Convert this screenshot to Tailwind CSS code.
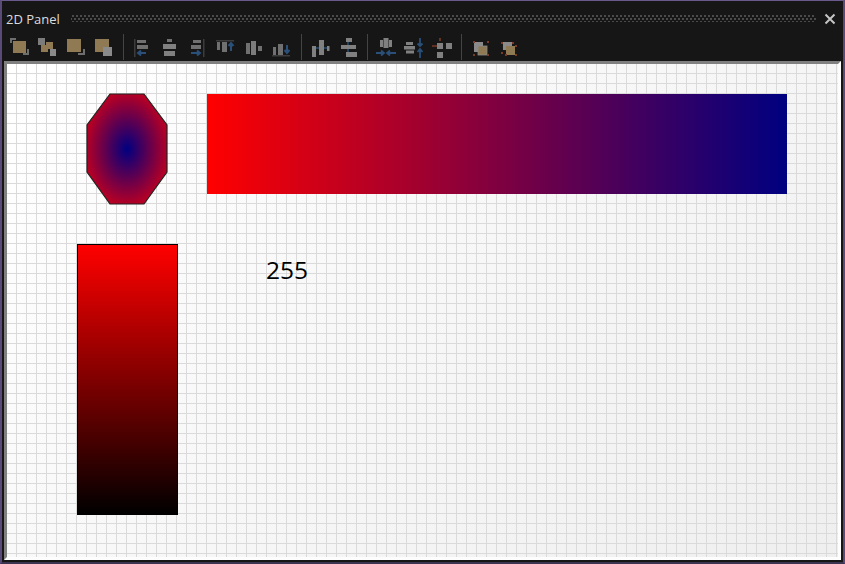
<!DOCTYPE html>
<html lang="en">

<head>
  <meta charset="UTF-8" />
  <meta name="viewport" content="width=device-width, initial-scale=1.0" />
  <title>2D Panel</title>
  <script src="https://cdn.jsdelivr.net/npm/@tailwindcss/browser@4"></script>
</head>

<body class="bg-[#161616] overflow-hidden">

  <div class="w-[845px] h-[564px] flex flex-col bg-[#161616] border-x-2 border-t border-b-2 border-x-[#5a4a78] border-t-[#6a5a8c] border-b-[#3c3350] font-['Open_Sans',sans-serif]">

    <!-- Title bar -->
    <div class="h-[33px] shrink-0 flex items-center pl-1 pr-[7px]">
      <span class="w-[65px] text-[13px] leading-none text-[#dcdcdc] pt-[3px]">2D Panel</span>
      <div class="flex-1 h-[7px] mt-[2px] bg-[radial-gradient(circle,#4a4a4a_0.8px,transparent_1px),radial-gradient(circle,#4a4a4a_0.8px,transparent_1px)] bg-size-[4px_6px] bg-position-[0_-2px,2px_1px]"></div>
      <svg class="w-3 h-3 ml-2 mt-[2px]" viewBox="0 0 12 12"><path d="M1.5 1.5 L10.5 10.5 M10.5 1.5 L1.5 10.5" stroke="#c4c4c4" stroke-width="2" /></svg>
    </div>

    <!-- Toolbar -->
    <div class="h-[27px] shrink-0 flex items-start pl-[3px] blur-[0.4px]">
      <svg width="28" height="26" viewBox="0 0 28 26"><path d="M6 9V5h5M23 15v5h-5" fill="none" stroke="#6e6e6e" stroke-width="2" /><rect x="8" y="7" width="13" height="12" fill="#8f7a54" /></svg>
      <svg width="28" height="26" viewBox="0 0 28 26"><rect x="5" y="4" width="7" height="7" fill="#7c7c7c" /><rect x="8" y="11" width="7" height="7" fill="#8f7a54" /><rect x="13" y="8" width="7" height="7" fill="#8f7a54" /><rect x="17" y="15" width="6" height="7" fill="#8a8a8a" /></svg>
      <svg width="28" height="26" viewBox="0 0 28 26"><path d="M23 15v5h-6" fill="none" stroke="#6e6e6e" stroke-width="2" /><rect x="6" y="5" width="14" height="13" fill="#8f7a54" /></svg>
      <svg width="28" height="26" viewBox="0 0 28 26"><rect x="6" y="5" width="14" height="13" fill="#8f7a54" /><rect x="14" y="13" width="9" height="9" fill="#8a8a8a" /></svg>
      <div class="w-px h-[26px] bg-[#444] ml-[6px] mr-[3px]"></div>

      <svg width="28" height="26" viewBox="0 0 28 26"><rect x="7" y="5" width="1.5" height="18" fill="#3c3c3c" /><rect x="10" y="6" width="9" height="3" fill="#707070" /><rect x="10" y="11" width="11" height="4" fill="#707070" /><path d="M19 19H11M14 16.5L11 19L14 21.5" fill="none" stroke="#2a4f78" stroke-width="2" /></svg>
      <svg width="28" height="26" viewBox="0 0 28 26"><rect x="12" y="5" width="5" height="3" fill="#707070" /><rect x="8" y="10" width="13" height="5" fill="#808080" /><rect x="9" y="17" width="11" height="5" fill="#808080" /></svg>
      <svg width="28" height="26" viewBox="0 0 28 26"><rect x="20" y="5" width="1.5" height="18" fill="#3c3c3c" /><rect x="10" y="6" width="8" height="3" fill="#707070" /><rect x="8" y="11" width="10" height="4" fill="#707070" /><path d="M8 19H17M14 16.5L17 19L14 21.5" fill="none" stroke="#2a4f78" stroke-width="2" /></svg>
      <svg width="28" height="26" viewBox="0 0 28 26"><rect x="5" y="6" width="18" height="1.5" fill="#3c3c3c" /><rect x="6" y="8" width="3" height="8" fill="#707070" /><rect x="11" y="8" width="5" height="10" fill="#707070" /><path d="M20 17V9M17.5 12L20 9L22.5 12" fill="none" stroke="#2a4f78" stroke-width="2" /></svg>
      <svg width="28" height="26" viewBox="0 0 28 26"><rect x="7" y="9" width="4" height="11" fill="#707070" /><rect x="12" y="7" width="5" height="14" fill="#7c7c7c" /><rect x="19" y="12" width="4" height="5" fill="#707070" /></svg>
      <svg width="28" height="26" viewBox="0 0 28 26"><rect x="5" y="21" width="18" height="1.5" fill="#3c3c3c" /><rect x="6" y="13" width="3" height="8" fill="#707070" /><rect x="11" y="10" width="5" height="11" fill="#707070" /><path d="M20 11V19M17.5 16L20 19L22.5 16" fill="none" stroke="#2a4f78" stroke-width="2" /></svg>
      <div class="w-px h-[26px] bg-[#444] ml-[6px] mr-[3px]"></div>

      <svg width="28" height="26" viewBox="0 0 28 26"><path d="M8 14H24" stroke="#2a4f78" stroke-width="1.5" /><rect x="7" y="12" width="4" height="11" fill="#808080" /><rect x="14" y="6" width="5" height="15" fill="#808080" /><rect x="22" y="12" width="2.5" height="5" fill="#808080" /></svg>
      <svg width="28" height="26" viewBox="0 0 28 26"><path d="M15 6V20" stroke="#2a4f78" stroke-width="1.5" /><rect x="13" y="4" width="6" height="4" fill="#808080" /><rect x="8" y="11" width="15" height="4" fill="#808080" /><rect x="13" y="18" width="11" height="5" fill="#808080" /></svg>
      <div class="w-px h-[26px] bg-[#444] ml-[6px] mr-[3px]"></div>

      <svg width="28" height="26" viewBox="0 0 28 26"><rect x="9" y="6" width="3" height="7" fill="#808080" /><rect x="12.5" y="4" width="5" height="10" fill="#808080" /><rect x="18" y="6" width="3" height="7" fill="#808080" /><path d="M5 19H13M10 16.5L13 19L10 21.5M25 19H16M19 16.5L16 19L19 21.5" fill="none" stroke="#2a4f78" stroke-width="1.8" /></svg>
      <svg width="28" height="26" viewBox="0 0 28 26"><rect x="7" y="8" width="7" height="3" fill="#808080" /><rect x="5" y="12" width="11" height="3.5" fill="#808080" /><rect x="7" y="16.5" width="8" height="3" fill="#808080" /><path d="M21 4V12M18.5 9.5L21 12L23.5 9.5M21 24V15M18.5 18L21 15L23.5 18" fill="none" stroke="#2a4f78" stroke-width="1.8" /></svg>
      <svg width="28" height="26" viewBox="0 0 28 26"><path d="M13 4V7M5 12H10" stroke="#7a3a28" stroke-width="1.6" /><rect x="10" y="9" width="6" height="6" fill="#808080" /><rect x="19" y="9" width="6" height="6" fill="#808080" /><rect x="10" y="18" width="6" height="6" fill="#808080" /></svg>
      <div class="w-px h-[26px] bg-[#444] ml-[6px] mr-[3px]"></div>

      <svg width="28" height="26" viewBox="0 0 28 26"><rect x="9" y="8" width="9" height="10" fill="#8a8a8a" /><rect x="13" y="12" width="9" height="9" fill="#8f7a54" stroke="#8a8a8a" stroke-width="0.8" /><rect x="8" y="7" width="2" height="2" fill="#7a3a28" /><rect x="22" y="7" width="2" height="2" fill="#7a3a28" /><rect x="8" y="20" width="2" height="2" fill="#7a3a28" /><rect x="22" y="20" width="2" height="2" fill="#7a3a28" /></svg>
      <svg width="28" height="26" viewBox="0 0 28 26"><rect x="10" y="8" width="9" height="8" fill="#8a8a8a" /><rect x="13" y="12" width="9" height="9" fill="#8f7a54" /><rect x="8" y="8" width="2" height="2" fill="#7a3a28" /><rect x="19" y="8" width="2" height="2" fill="#7a3a28" /><rect x="22" y="11" width="2" height="2" fill="#7a3a28" /><rect x="8" y="18" width="2" height="2" fill="#7a3a28" /><rect x="12" y="20" width="2" height="2" fill="#7a3a28" /><rect x="22" y="20" width="2" height="2" fill="#7a3a28" /></svg>
    </div>

    <!-- Canvas -->
    <div class="relative flex-1 mx-[2px] mb-[2px] border-[3px] border-t-[#808080] border-l-[#808080] border-r-[#fdfdfd] border-b-[#fdfdfd] bg-[linear-gradient(to_right,transparent_9px,#dadada_9px),linear-gradient(to_bottom,transparent_9px,#dadada_9px),linear-gradient(135deg,#ffffff,#efefef)] bg-size-[10px_10px,10px_10px,100%_100%]">

      <svg class="absolute left-[79px] top-[29px]" width="83" height="112" viewBox="0 0 83 112">
        <defs>
          <radialGradient id="octa" cx="50%" cy="50%" r="72%">
            <stop offset="0" stop-color="#000080" />
            <stop offset="1" stop-color="#ff0000" />
          </radialGradient>
        </defs>
        <path d="M24 1H58L81 32V79L58 111H24L1 79V32Z" fill="url(#octa)" stroke="#222222" stroke-width="1.2" />
      </svg>

      <div class="absolute left-[200px] top-[30px] w-[580px] h-[100px] bg-[linear-gradient(to_right,#ff0000,#000080)]"></div>

      <div class="absolute left-[70px] top-[180px] w-[101px] h-[271px] border border-black border-b-0 bg-[linear-gradient(to_bottom,#ff0000,#000000)]"></div>

      <span class="absolute left-[259px] top-[189px] text-[24.5px] leading-[34px] text-black">255</span>
    </div>
  </div>

</body>

</html>
